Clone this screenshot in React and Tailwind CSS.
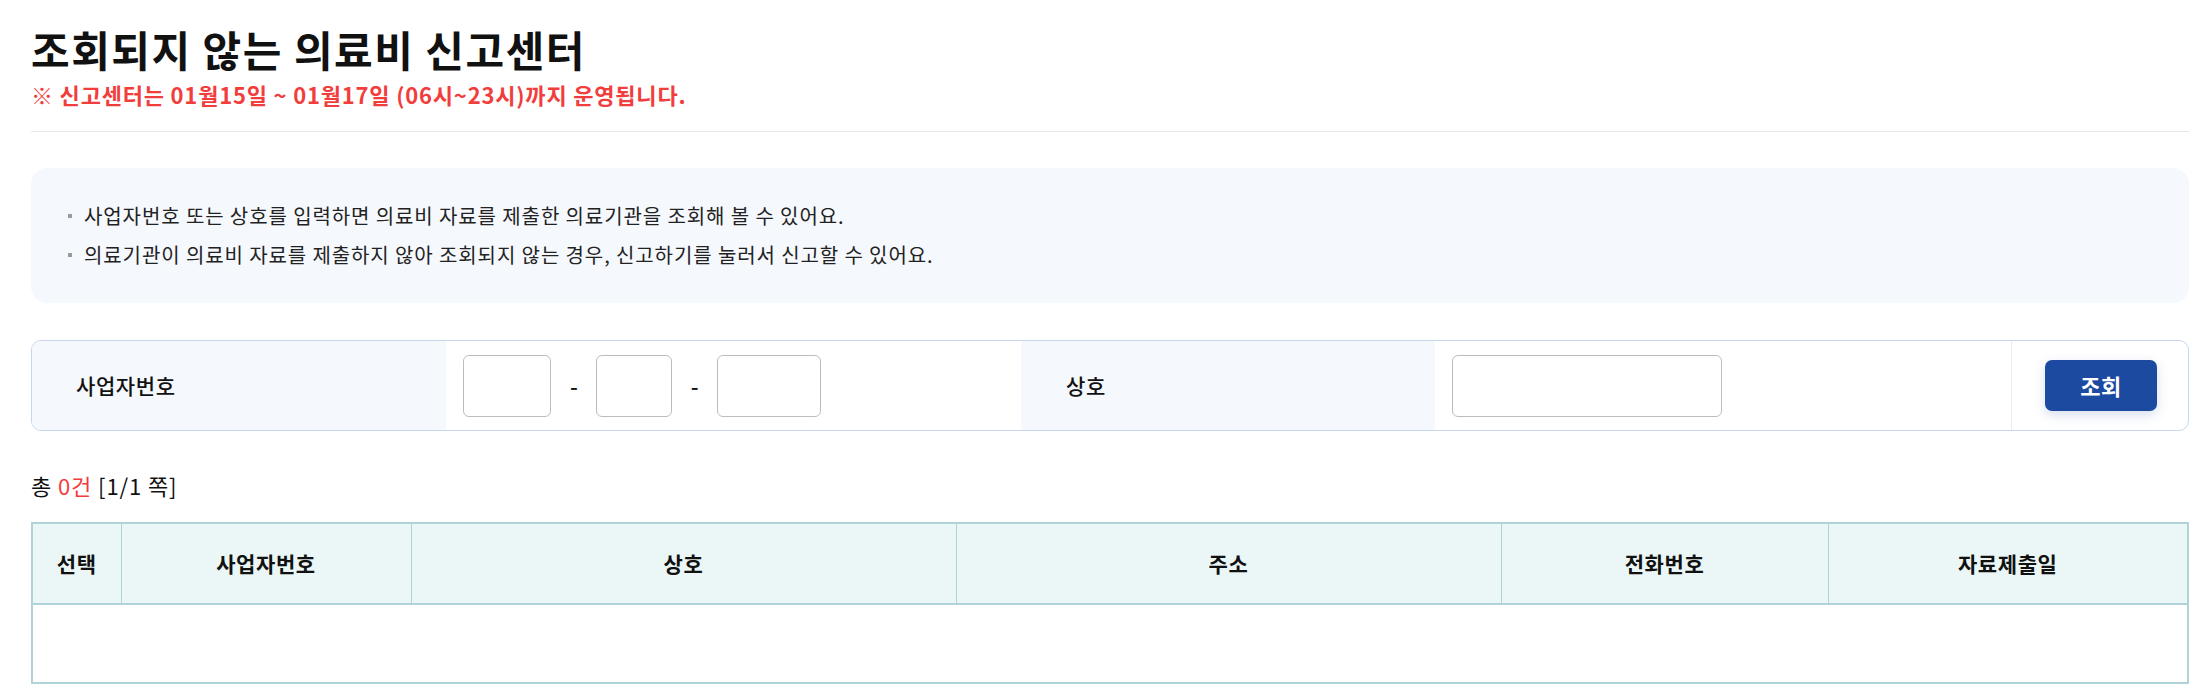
import { useState } from "react";

const FONT = { fontFamily: '"Noto Sans CJK KR", "Noto Sans", sans-serif' };

const COLUMNS = [
    { label: "선택", width: "w-[89px]" },
    { label: "사업자번호", width: "w-[290px]" },
    { label: "상호", width: "w-[545px]" },
    { label: "주소", width: "w-[545px]" },
    { label: "전화번호", width: "w-[327px]" },
    { label: "자료제출일", width: "" }
];

const NOTES = [
    "사업자번호 또는 상호를 입력하면 의료비 자료를 제출한 의료기관을 조회해 볼 수 있어요.",
    "의료기관이 의료비 자료를 제출하지 않아 조회되지 않는 경우, 신고하기를 눌러서 신고할 수 있어요."
];

export default function App() {
    const [bizNo, setBizNo] = useState({ a: "", b: "", c: "" });
    const [name, setName] = useState("");

    const setPart = (key, value) => setBizNo((prev) => ({ ...prev, [key]: value }));

    return (
        <div className="min-h-screen bg-white pl-[31px] pr-[14px] pt-[24px] text-[#111]" style={FONT}>
            <h1 className="text-[42px] font-bold leading-[50px] tracking-[1.5px]">조회되지 않는 의료비 신고센터</h1>
            <p className="mt-[7px] text-[22px] font-bold leading-[26px] tracking-[0.8px] text-[#f23d3d]">
                ※ 신고센터는 01월15일 ~ 01월17일 (06시~23시)까지 운영됩니다.
            </p>
            <div className="mt-[24px] border-t border-[#e6e8ec]" />

            <ul className="mt-[36px] rounded-[16px] bg-[#f5f8fd] pb-[29px] pl-[37px] pt-[28px]">
                {NOTES.map((note) => (
                    <li key={note} className="flex items-center text-[20px] leading-[39px] tracking-[0.9px] text-[#222]">
                        <span className="mr-[12px] h-[4px] w-[4px] bg-[#9a9a9a]" />
                        {note}
                    </li>
                ))}
            </ul>

            <div className="mt-[37px] flex h-[91px] overflow-hidden rounded-[10px] border border-[#c6d6ec]">
                <div className="flex w-[414px] items-center bg-[#f5f8fd] pl-[44px] text-[21px] font-medium tracking-[0.6px]">사업자번호</div>
                <div className="flex w-[575px] items-center pl-[17px]">
                    <input className="h-[62px] w-[88px] rounded-[6px] border border-[#bcbcbc]" value={bizNo.a} onChange={(e) => setPart("a", e.target.value)} />
                    <span className="ml-[19px] mr-[18px] text-[22px] font-medium">-</span>
                    <input className="h-[62px] w-[76px] rounded-[6px] border border-[#bcbcbc]" value={bizNo.b} onChange={(e) => setPart("b", e.target.value)} />
                    <span className="ml-[19px] mr-[18px] text-[22px] font-medium">-</span>
                    <input className="h-[62px] w-[104px] rounded-[6px] border border-[#bcbcbc]" value={bizNo.c} onChange={(e) => setPart("c", e.target.value)} />
                </div>
                <div className="flex w-[414px] items-center bg-[#f5f8fd] pl-[45px] text-[21px] font-medium tracking-[0.6px]">상호</div>
                <div className="flex w-[576px] items-center pl-[17px]">
                    <input className="h-[62px] w-[270px] rounded-[6px] border border-[#bcbcbc]" value={name} onChange={(e) => setName(e.target.value)} />
                </div>
                <div className="flex flex-1 items-center border-l border-[#e8ecf2] pl-[33px]">
                    <button type="button" className="h-[51px] w-[112px] rounded-[7px] bg-[#1b4aa0] text-[22px] font-bold tracking-[0.5px] text-white shadow-[0_4px_12px_rgba(27,74,160,0.18)]">
                        조회
                    </button>
                </div>
            </div>

            <p className="mt-[39px] text-[22px] leading-[30px] tracking-[0.9px]">
                총 <span className="text-[#f23d3d]">0건</span> [1/1 쪽]
            </p>

            <table className="mt-[22px] w-full border-collapse border-2 border-[#afd3d8]">
                <thead>
                    <tr className="h-[81px] bg-[#ebf7f6]">
                        {COLUMNS.map((col) => (
                            <th key={col.label} className={`${col.width} border-x border-b-2 border-[#afd3d8] text-[21px] font-bold tracking-[0.6px]`}>
                                {col.label}
                            </th>
                        ))}
                    </tr>
                </thead>
                <tbody>
                    <tr className="h-[79px]">
                        <td colSpan={6} />
                    </tr>
                </tbody>
            </table>
        </div>
    );
}
